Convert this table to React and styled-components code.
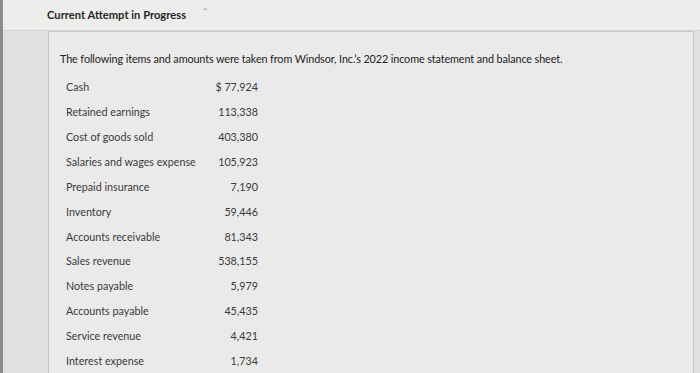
import styled, { createGlobalStyle } from 'styled-components';

const items = [
  ['Cash', '$ 77,924'],
  ['Retained earnings', '113,338'],
  ['Cost of goods sold', '403,380'],
  ['Salaries and wages expense', '105,923'],
  ['Prepaid insurance', '7,190'],
  ['Inventory', '59,446'],
  ['Accounts receivable', '81,343'],
  ['Sales revenue', '538,155'],
  ['Notes payable', '5,979'],
  ['Accounts payable', '45,435'],
  ['Service revenue', '4,421'],
  ['Interest expense', '1,734'],
];

export default function App() {
  return (
    <>
      <Global />
      <Page>
        <Header>
          <Title>Current Attempt in Progress</Title>
          <Caret>ˇ</Caret>
        </Header>
        <Body>
          <Card>
            <Intro>
              The following items and amounts were taken from Windsor, Inc.’s 2022 income statement and balance sheet.
            </Intro>
            <Table>
              {items.map(([label, value]) => (
                <Row key={label}>
                  <Label>{label}</Label>
                  <Value>{value}</Value>
                </Row>
              ))}
            </Table>
          </Card>
        </Body>
      </Page>
    </>
  );
}

const Global = createGlobalStyle`
  html, body {
    margin: 0;
    padding: 0;
    height: 100%;
    overflow: hidden;
    background: #dedfe2;
  }
  body {
    font-family: Lato, "Open Sans", sans-serif;
  }
`;

const Page = styled.div`
  display: flex;
  flex-direction: column;
  height: 373px;
  border-left: 3px solid #8c8c8c;
  background: #e1e1e2;
`;

const Header = styled.div`
  display: flex;
  align-items: center;
  gap: 17px;
  height: 29px;
  padding-left: 44px;
  padding-bottom: 2px;
  background: #ededec;
  border-bottom: 1px solid #d2d2d2;
`;

const Title = styled.h1`
  margin: 0;
  font-size: 11.2px;
  font-weight: 700;
  color: #262626;
`;

const Caret = styled.span`
  font-size: 11px;
  color: #888;
  margin-top: -4px;
`;

const Body = styled.div`
  flex: 1;
  display: flex;
  padding-left: 45px;
  padding-right: 6px;
`;

const Card = styled.div`
  flex: 1;
  background: #eaeaea;
  border: 1px solid #c9c9c9;
  border-bottom: none;
  padding: 20px 0 0 11px;
`;

const Intro = styled.p`
  margin: 0 0 9px;
  font-size: 10.8px;
  color: #222;
  letter-spacing: -0.1px;
`;

const Table = styled.div`
  display: flex;
  flex-direction: column;
  margin-left: 6px;
  width: 192px;
`;

const Row = styled.div`
  display: flex;
  align-items: center;
  justify-content: space-between;
  height: 24.9px;
  font-size: 10.75px;
  color: #3a3a3a;
`;

const Label = styled.span``;

const Value = styled.span`
  text-align: right;
`;
